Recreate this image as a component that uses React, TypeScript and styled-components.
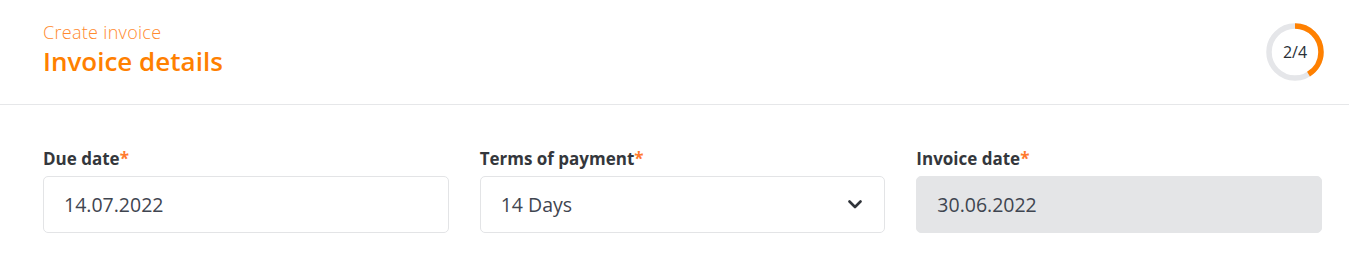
import React from "react"
import styled, { createGlobalStyle } from "styled-components"

const GlobalStyle = createGlobalStyle`
	body {
		margin: 0;
		background: #ffffff;
		font-family: "Open Sans", "Liberation Sans", sans-serif;
	}
`

const Header = styled.header`
	height: 104px;
	display: flex;
	align-items: center;
	justify-content: space-between;
	padding: 0 25px 0 43px;
	border-bottom: 1px solid #e6e7e9;
`

const TitleBlock = styled.div`
	display: flex;
	flex-direction: column;
	padding-bottom: 7px;
`

const Overline = styled.div`
	font-size: 18px;
	font-weight: 300;
	line-height: 22px;
	letter-spacing: 0.3px;
	color: #ff8a2e;
`

const Title = styled.h1`
	margin: 3px 0 0;
	font-size: 26px;
	font-weight: 600;
	line-height: 30px;
	color: #ff8000;
`

const Progress = styled.div`
	position: relative;
	width: 58px;
	height: 58px;
	display: flex;
	align-items: center;
	justify-content: center;
`

const ProgressRing = styled.svg`
	position: absolute;
	inset: 0;
`

const ProgressText = styled.span`
	position: relative;
	font-size: 16px;
	color: #2a2f36;
`

const Fields = styled.div`
	display: grid;
	grid-template-columns: repeat(3, 1fr);
	column-gap: 31px;
	padding: 44px 27px 0 43px;
`

const Field = styled.div`
	display: flex;
	flex-direction: column;
`

const Label = styled.label`
	font-size: 17px;
	font-weight: 700;
	line-height: 20px;
	color: #34373c;
	margin-bottom: 7px;
`

const Required = styled.span`
	color: #ff7a2f;
`

const Box = styled.div<{ $disabled?: boolean }>`
	height: 57px;
	box-sizing: border-box;
	display: flex;
	align-items: center;
	justify-content: space-between;
	padding: 0 22px 0 20px;
	border: 1px solid ${(p) => (p.$disabled ? "#e4e5e7" : "#e3e4e6")};
	border-radius: 5px;
	background: ${(p) => (p.$disabled ? "#e4e5e7" : "#ffffff")};
	font-size: 19.5px;
	color: #3f4550;
`

const Chevron = () => (
	<svg width="14" height="9" viewBox="0 0 14 9">
		<path d="M1.5 1.5 L7 7 L12.5 1.5" fill="none" stroke="#30343a" strokeWidth="2.6" strokeLinecap="round" strokeLinejoin="round" />
	</svg>
)

const step = 2
const steps = 4
const radius = 26
const circumference = 2 * Math.PI * radius
// the orange arc in the design is a bit shorter than half the ring
const arc = circumference * 0.41

export default function App() {
	return (
		<>
			<GlobalStyle />
			<Header>
				<TitleBlock>
					<Overline>Create invoice</Overline>
					<Title>Invoice details</Title>
				</TitleBlock>
				<Progress>
					<ProgressRing width="58" height="58" viewBox="0 0 58 58">
						<circle cx="29" cy="29" r={radius} fill="none" stroke="#e5e6e9" strokeWidth="5.5" />
						<circle
							cx="29"
							cy="29"
							r={radius}
							fill="none"
							stroke="#ff8000"
							strokeWidth="5.5"
							strokeDasharray={`${arc} ${circumference}`}
							transform="rotate(-90 29 29)"
						/>
					</ProgressRing>
					<ProgressText>
						{step}/{steps}
					</ProgressText>
				</Progress>
			</Header>
			<Fields>
				<Field>
					<Label>
						Due date<Required>*</Required>
					</Label>
					<Box>14.07.2022</Box>
				</Field>
				<Field>
					<Label>
						Terms of payment<Required>*</Required>
					</Label>
					<Box>
						14 Days
						<Chevron />
					</Box>
				</Field>
				<Field>
					<Label>
						Invoice date<Required>*</Required>
					</Label>
					<Box $disabled>30.06.2022</Box>
				</Field>
			</Fields>
		</>
	)
}
